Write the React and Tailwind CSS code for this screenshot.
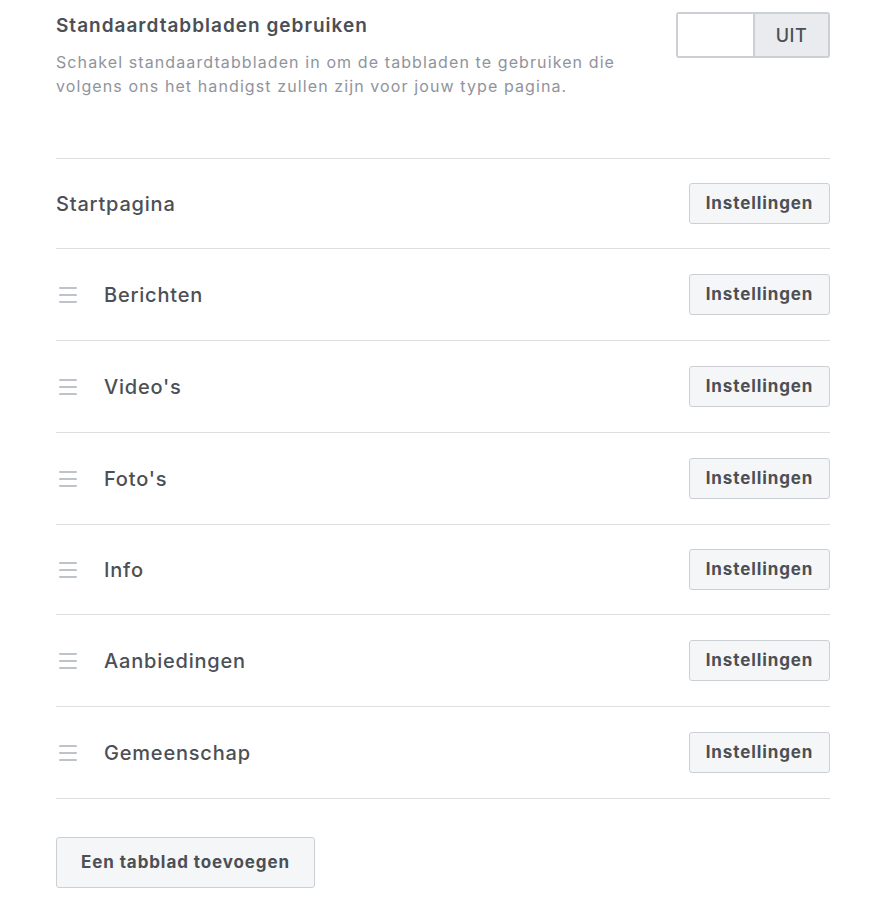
import React from 'react';

const tabs = [
  { name: 'Berichten', h: 'h-[92px]' },
  { name: "Video's", h: 'h-[92px]' },
  { name: "Foto's", h: 'h-[92px]' },
  { name: 'Info', h: 'h-[90px]' },
  { name: 'Aanbiedingen', h: 'h-[92px]' },
  { name: 'Gemeenschap', h: 'h-[92px]' },
];

function DragHandle() {
  return (
    <svg width="20" height="18" viewBox="0 0 20 18" className="shrink-0">
      <rect x="1" y="1" width="18" height="2" rx="1" fill="#bec2c9" />
      <rect x="1" y="8" width="18" height="2" rx="1" fill="#bec2c9" />
      <rect x="1" y="15" width="18" height="2" rx="1" fill="#bec2c9" />
    </svg>
  );
}

function SettingsButton() {
  return (
    <button className="w-[141px] h-[41px] rounded-[3px] border border-[#ccd0d5] bg-[#f5f6f7] text-[17px] font-bold text-[#4b4f56] tracking-[0.9px]">
      Instellingen
    </button>
  );
}

export default function App() {
  return (
    <div className="w-[884px] h-[908px] bg-white font-['Inter','Liberation_Sans',sans-serif]">
      <div className="ml-[56px] w-[774px]">
        {/* Header with toggle */}
        <div className="flex justify-between items-start h-[158px]">
          <div className="pt-[13px]">
            <h1 className="text-[19px] leading-[26px] font-semibold text-[#4b4f56] tracking-[1px]">Standaardtabbladen gebruiken</h1>
            <p className="mt-[11px] w-[590px] text-[16px] leading-[24px] text-[#90949c] tracking-[1.1px]">
              Schakel standaardtabbladen in om de tabbladen te gebruiken die volgens ons het handigst zullen zijn voor jouw type pagina.
            </p>
          </div>
          <div className="mt-[12px] flex h-[46px] w-[154px] rounded-[3px] border-2 border-[#ccd0d5] overflow-hidden">
            <div className="w-[77px] bg-white border-r-2 border-[#ccd0d5]" />
            <div className="flex-1 bg-[#e9ebee] flex items-center justify-center text-[18px] font-medium text-[#4b4f56] tracking-[0.5px]">
              UIT
            </div>
          </div>
        </div>

        {/* Tab rows */}
        <div className="border-t border-[#dddfe2]">
          <div className="flex items-center justify-between h-[90px] border-b border-[#dddfe2]">
            <span className="text-[20px] font-medium text-[#4b4f56] tracking-[0.8px]">Startpagina</span>
            <SettingsButton />
          </div>
          {tabs.map((tab) => (
            <div key={tab.name} className={`flex items-center justify-between border-b border-[#dddfe2] ${tab.h}`}>
              <div className="flex items-center">
                <div className="ml-[2px] w-[46px]">
                  <DragHandle />
                </div>
                <span className="text-[20px] font-medium text-[#4b4f56] tracking-[0.8px]">{tab.name}</span>
              </div>
              <SettingsButton />
            </div>
          ))}
        </div>

        <button className="mt-[38px] w-[259px] h-[51px] rounded-[3px] border border-[#ccd0d5] bg-[#f5f6f7] text-[17px] font-bold text-[#4b4f56] tracking-[0.9px]">
          Een tabblad toevoegen
        </button>
      </div>
    </div>
  );
}
